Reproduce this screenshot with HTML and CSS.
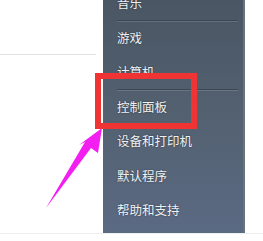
FILE: index.html
```html
<!DOCTYPE html>
<html lang="zh">
<head>
    <meta charset="UTF-8">
    <title>开始菜单 - 控制面板</title>
    <link rel="stylesheet" href="styles.css">
</head>
<body>

<!-- 页面主体 -->
<div class="page">
    <div class="side">
        <div class="side-head"></div>
    </div>

    <!-- 开始菜单右栏 -->
    <div class="menu">
        <ul class="menu-list">
            <li class="item sep">音乐</li>
            <li class="item">游戏</li>
            <li class="item sep">计算机</li>
            <li class="item">控制面板</li>
            <li class="item">设备和打印机</li>
            <li class="item">默认程序</li>
            <li class="item">帮助和支持</li>
        </ul>
    </div>
</div>

<!-- 标注：红框和箭头 -->
<div class="mark-box"></div>
<svg class="mark-arrow" width="263" height="241" viewBox="0 0 263 241">
    <polygon points="102,128 98,153 91,148 46,208 85,142 79,145" fill="#f21ff0"/>
</svg>

</body>
</html>
```

FILE: styles.css
```css
/* Grundlayout */
body {
    margin: 0;
    background: #fff;
    font-family: "Noto Sans CJK SC", "Noto Sans", sans-serif;
    position: relative;
    width: 263px;
    height: 241px;
    overflow: hidden;
}

.page {
    display: flex;
    height: 233px;
    border-bottom: 1px solid #eeeeee;
}

.side {
    width: 103px;
    flex-shrink: 0;
}

.side-head {
    height: 54px;
    margin-right: 7px;
    border-bottom: 1px solid #e2e2e2;
}

/* Menü */
.menu {
    width: 140px;
    height: 233px;
    overflow: hidden;
    background: linear-gradient(180deg, #4a5664 0%, #52606f 45%, #5b6a83 100%);
    border-right: 2px solid #67737f;
}

.menu-list {
    list-style: none;
    margin: -14px 0 0 0;
    padding: 0;
}

.item {
    height: 34.5px;
    line-height: 34.5px;
    margin: 0 5px 0 14px;
    font-size: 12.5px;
    color: #eef1f4;
    text-shadow: 0 0 2px rgba(0, 0, 0, 0.45);
    box-sizing: border-box;
    white-space: nowrap;
}

.item.sep {
    border-bottom: 1px solid #3c4754;
    box-shadow: 0 1px 0 rgba(255, 255, 255, 0.14);
}

/* Markierung */
.mark-box {
    position: absolute;
    left: 95px;
    top: 73px;
    width: 90px;
    height: 44px;
    border: 6px solid #f03434;
}

.mark-arrow {
    position: absolute;
    left: 0;
    top: 0;
}
```
